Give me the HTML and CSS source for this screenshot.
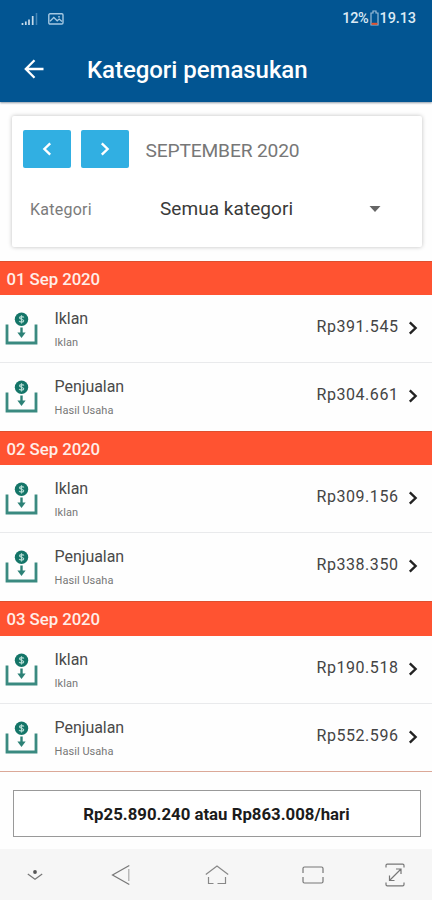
FILE: index.html
```
<!DOCTYPE html>
<html lang="id">
<head>
<meta charset="utf-8">
<title>Kategori pemasukan</title>
<link rel="stylesheet" href="styles.css">
</head>
<body>
<svg class="defs" aria-hidden="true">
  <symbol id="income" viewBox="0 0 34 34">
    <path d="M2 12.5V31H31V12.5" fill="none" stroke="#3a8a80" stroke-width="2.8"/>
    <circle cx="16.5" cy="7.3" r="6.7" fill="#147568"/>
    <path d="M18.8 5.5c-.5-1.2-4.3-1.4-4.3.3 0 1.8 4.2 1.1 4.2 3 0 1.7-3.8 1.6-4.5.2M16.5 3.2v8.2" fill="none" stroke="#b5dcd4" stroke-width="1.2"/>
    <path d="M16.5 15.5v6" stroke="#2c8176" stroke-width="2.4"/>
    <path d="M12.400 20.500h8.200l-4.100 5.600z" fill="#2c8176"/>
  </symbol>
  <symbol id="chevron" viewBox="0 0 10 14">
    <path d="M1.8 1.4 7.6 7l-5.8 5.6" fill="none" stroke="currentColor" stroke-width="2.4"/>
  </symbol>
</svg>
<div class="screen">
  <header class="top">
    <div class="status">
      <svg class="signal" viewBox="0 0 18 14"><path d="M1.5 11v2M4.8 9.5V13M8 7.5V13M11.7 4v9" stroke="#c9dceb" stroke-width="1.7"/><path d="M15.5 1v12" stroke="#4585b5" stroke-width="1.5"/></svg>
      <svg class="picture" viewBox="0 0 16 12"><rect x=".8" y=".8" width="14.2" height="10.2" rx="1.2" fill="none" stroke="#a5c8e2" stroke-width="1.4"/><path d="M2 8.2 5.8 4.5l3.4 3.3 2-1.8L14 8.5M10 3.8h2" fill="none" stroke="#a5c8e2" stroke-width="1.3"/></svg>
      <span class="percent">12%</span>
      <svg class="battery" viewBox="0 0 9 16"><path d="M3 1h3v2h2v12H1V3h2z" fill="none" stroke="#9bbdd7" stroke-width="1.2"/><path d="M1.5 13.8h6" stroke="#e5532e" stroke-width="2"/></svg>
      <span class="clock">19.13</span>
    </div>
    <div class="appbar">
      <svg class="back" viewBox="0 0 20 20"><path d="M19.5 10H2M10.5 1.2 1.8 10l8.7 8.8" fill="none" stroke="#fff" stroke-width="2.3"/></svg>
      <h1>Kategori pemasukan</h1>
    </div>
  </header>

  <section class="filter">
    <div class="period">
      <button class="step prev"><svg viewBox="0 0 10 14"><use href="#chevron"/></svg></button>
      <button class="step"><svg viewBox="0 0 10 14"><use href="#chevron"/></svg></button>
      <span class="month">SEPTEMBER 2020</span>
    </div>
    <div class="category">
      <span class="label">Kategori</span>
      <span class="value">Semua kategori</span>
      <svg class="caret" viewBox="0 0 12 6"><path d="M.5 0h11L6 6z" fill="#666"/></svg>
    </div>
  </section>

  <main class="list">
    <section class="day">
      <h2>01 Sep 2020</h2>
      <div class="row"><svg class="icon"><use href="#income"/></svg><div class="name"><b>Iklan</b><small>Iklan</small></div><span class="amount">Rp391.545</span><svg class="go"><use href="#chevron"/></svg></div>
      <div class="row"><svg class="icon"><use href="#income"/></svg><div class="name"><b>Penjualan</b><small>Hasil Usaha</small></div><span class="amount">Rp304.661</span><svg class="go"><use href="#chevron"/></svg></div>
    </section>
    <section class="day">
      <h2>02 Sep 2020</h2>
      <div class="row"><svg class="icon"><use href="#income"/></svg><div class="name"><b>Iklan</b><small>Iklan</small></div><span class="amount">Rp309.156</span><svg class="go"><use href="#chevron"/></svg></div>
      <div class="row"><svg class="icon"><use href="#income"/></svg><div class="name"><b>Penjualan</b><small>Hasil Usaha</small></div><span class="amount">Rp338.350</span><svg class="go"><use href="#chevron"/></svg></div>
    </section>
    <section class="day">
      <h2>03 Sep 2020</h2>
      <div class="row"><svg class="icon"><use href="#income"/></svg><div class="name"><b>Iklan</b><small>Iklan</small></div><span class="amount">Rp190.518</span><svg class="go"><use href="#chevron"/></svg></div>
      <div class="row"><svg class="icon"><use href="#income"/></svg><div class="name"><b>Penjualan</b><small>Hasil Usaha</small></div><span class="amount">Rp552.596</span><svg class="go"><use href="#chevron"/></svg></div>
    </section>
  </main>

  <footer class="total"><span>Rp25.890.240 atau Rp863.008/hari</span></footer>

  <nav class="nav">
    <svg class="n1" viewBox="0 0 16 12"><circle cx="8" cy="3" r="1.9" fill="#555"/><path d="M.8 5 8 10.2 15.2 5" fill="none" stroke="#777" stroke-width="1.2"/></svg>
    <svg class="n2" viewBox="0 0 20 22"><path d="M18.3 1.4 1.5 11l16.8 9.6" fill="none" stroke="#777" stroke-width="1.2"/><path d="M17.8 5v12" stroke="#aaa" stroke-width="1.2"/></svg>
    <svg class="n3" viewBox="0 0 24 20"><path d="M.8 9.5 12 1l11.2 8.5M3.5 12v6.5h5M20.5 12v6.5h-8" fill="none" stroke="#888" stroke-width="1.2"/></svg>
    <svg class="n4" viewBox="0 0 22 18"><path d="M1 7V2.5Q1 1 2.5 1h17Q21 1 21 2.5V7M1 11v4.5Q1 17 2.5 17h17q1.5 0 1.5-1.5V11" fill="none" stroke="#777" stroke-width="1.2"/></svg>
    <svg class="n5" viewBox="0 0 20 24"><path d="M1 4.5V2.5Q1 1.2 2.3 1.2h15.4Q19 1.2 19 2.5v2M1 19.5v2q0 1.3 1.3 1.3h15.4q1.3 0 1.3-1.3v-2M4.5 17.5 16 6M11 6h5v5M4.5 12.5v5h5" fill="none" stroke="#777" stroke-width="1.2"/></svg>
  </nav>
</div>
</body>
</html>
```

FILE: styles.css
```
* { box-sizing: border-box; }
body { margin: 0; background: #fefefe; font-family: Roboto, "Liberation Sans", sans-serif; }
svg { display: block; flex: none; }
.defs { width: 0; height: 0; position: absolute; }
.screen { width: 432px; height: 900px; display: flex; flex-direction: column; overflow: hidden; }

.top { flex: none; height: 102px; background: #025592; color: #fff; box-shadow: 0 1px 2px rgba(0, 30, 60, .45); }
.status { height: 37px; display: flex; align-items: center; padding: 0 16px 0 21px; font-size: 14.5px; line-height: 18px; font-weight: 500; color: #dceaf5; }
.signal { width: 18px; height: 14px; margin-right: 9px; }
.picture { width: 16px; height: 12px; }
.percent { margin-left: auto; letter-spacing: -.3px; }
.battery { width: 9px; height: 16px; margin: -2px 1px 0 1px; }
.clock { letter-spacing: -.1px; }
.appbar { height: 65px; display: flex; align-items: center; padding: 0 0 1px 24px; }
.back { width: 20px; height: 20px; }
h1 { margin: 2px 0 0 43px; font-size: 24px; line-height: 30px; font-weight: 500; letter-spacing: -.05px; white-space: nowrap; }

.filter { flex: none; width: 410px; height: 131px; margin: 14px 0 0 12px; padding: 14px 11px 0; background: #fff; border-radius: 2px; box-shadow: 0 0 4px rgba(0, 0, 0, .25); }
.period { display: flex; align-items: center; height: 38px; }
.step { width: 48px; height: 38px; margin: 0 10px 0 0; padding: 0; border: 0; border-radius: 2px; background: #31afe2; color: #fff; display: flex; align-items: center; justify-content: center; }
.step svg { width: 10px; height: 14px; }
.prev svg { transform: scaleX(-1); }
.month { margin: 3px 0 0 6.500px; font-size: 19.2px; line-height: 24px; font-weight: 400; letter-spacing: -.15px; color: #777; }
.category { display: flex; align-items: center; height: 30px; margin-top: 26px; padding-left: 7px; }
.label { width: 130px; padding-top: 1px; font-size: 16px; line-height: 20px; font-weight: 400; color: #7b7b7b; letter-spacing: .25px; }
.value { width: 209px; font-size: 19px; line-height: 24px; color: #3a3a3a; font-weight: 400; letter-spacing: .05px; }
.caret { width: 12px; height: 6px; }

.list { flex: none; margin-top: 14px; height: 511px; border-bottom: 1px solid #dba898; }
.day { height: 170.200px; }
.day:last-child { height: 170px; }
h2 { margin: 0; height: 34.200px; padding-left: 6.500px; background: #ff5331; border-top: 1px solid #de4f2e; color: #ffeee8; font-size: 16.800px; line-height: 34px; font-weight: 500; letter-spacing: -.05px; }
.row { height: 67px; display: flex; padding-left: 5px; }
.row + .row { height: 68px; border-top: 1px solid #e9eaec; }
.icon { width: 34px; height: 34px; margin-top: 17px; }
.name { width: 262px; margin: 14px 0 0 15.500px; display: flex; flex-direction: column; }
.name b { font-size: 16px; line-height: 20px; font-weight: 400; color: #4a4a4a; letter-spacing: -.05px; }
.name small { margin-top: 7px; font-size: 11px; line-height: 14px; color: #777; letter-spacing: .05px; }
.amount { width: 91px; margin-top: 22px; font-size: 16px; line-height: 20px; color: #444; letter-spacing: .55px; }
.go { width: 10px; height: 14px; margin-top: 26px; color: #222; }

.total { flex: none; width: 408px; height: 47px; margin: 18px 0 0 12.500px; border: 1px solid #999; background: #fff; display: flex; align-items: center; justify-content: center; padding-top: 1px; font-size: 16.800px; line-height: 20px; font-weight: 700; letter-spacing: 0; color: #1b1b1b; }
.nav { flex: 1; margin-top: 12px; padding: 0 26px 0 27px; background: #f6f6f6; display: flex; align-items: center; }
.n1 { width: 16px; height: 12px; }
.n2 { width: 20px; height: 22px; margin-left: 68px; }
.n3 { width: 24px; height: 20px; margin-left: 74px; }
.n4 { width: 22px; height: 18px; margin-left: 73px; }
.n5 { width: 20px; height: 24px; margin-left: 61px; }
```
